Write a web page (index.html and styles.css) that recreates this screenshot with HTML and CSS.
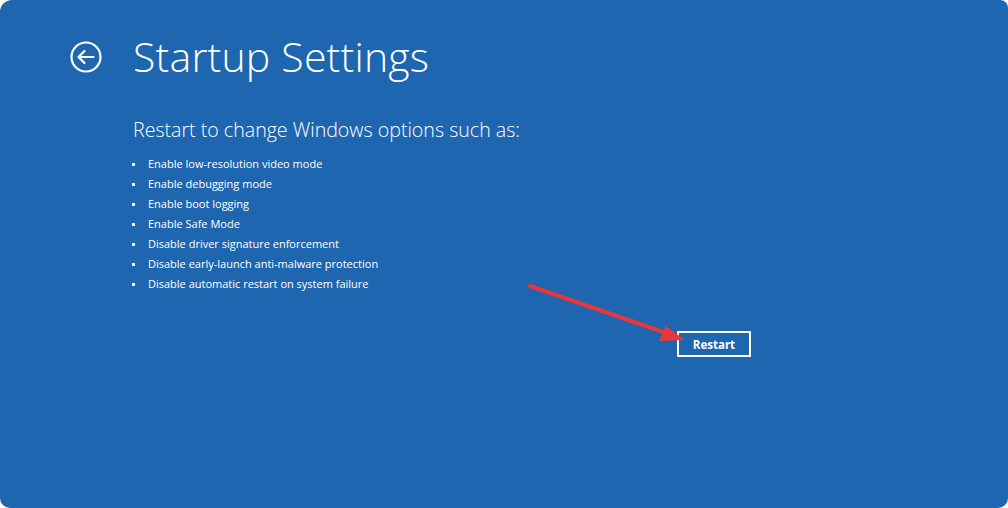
FILE: index.html
```html
<!DOCTYPE html>
<html>
<head>
<meta charset="utf-8">
<link rel="stylesheet" href="styles.css">
</head>
<body>
<div class="screen">
  <header class="head">
    <svg class="back" width="34" height="34" viewBox="0 0 34 34">
      <circle cx="17" cy="17" r="14.5" fill="none" stroke="#fff" stroke-width="2.2"/>
      <path d="M9.5 17 H24.5 M15.5 11 L9.5 17 L15.5 23" fill="none" stroke="#fff" stroke-width="2.2" stroke-linecap="round" stroke-linejoin="round"/>
    </svg>
    <h1 class="title">Startup Settings</h1>
  </header>
  <main class="content">
    <p class="lead">Restart to change Windows options such as:</p>
    <ul class="opts">
      <li>Enable low-resolution video mode</li>
      <li>Enable debugging mode</li>
      <li>Enable boot logging</li>
      <li>Enable Safe Mode</li>
      <li>Disable driver signature enforcement</li>
      <li>Disable early-launch anti-malware protection</li>
      <li>Disable automatic restart on system failure</li>
    </ul>
    <div class="actions">
      <button class="restart">Restart</button>
    </div>
  </main>
  <svg class="arrow" width="170" height="70" viewBox="0 0 170 70">
    <path d="M3 3 L145 52" stroke="#e8373a" stroke-width="4" stroke-linecap="round"/>
    <polygon points="158,57 139,43 132,58" fill="#e8373a"/>
  </svg>
</div>
</body>
</html>
```
FILE: styles.css
```css
html, body {
  margin: 0;
  padding: 0;
  background: #ffffff;
}
.screen {
  position: relative;
  width: 1008px;
  height: 508px;
  background: #1f66b0;
  border-radius: 12px 8px 10px 10px;
  overflow: hidden;
  color: #fff;
  font-family: "Open Sans", "Noto Sans", sans-serif;
}
.head {
  display: flex;
  align-items: center;
  padding: 28px 0 0 69px;
  height: 56px;
}
.back {
  display: block;
  margin-right: 30px;
  margin-top: 1px;
}
.title {
  margin: 0;
  font-weight: 300;
  font-size: 41px;
  letter-spacing: 0.2px;
  line-height: 56px;
}
.content {
  padding: 0 0 0 133px;
}
.lead {
  margin: 33px 0 0 0;
  font-size: 19.6px;
  font-weight: 300;
  line-height: 26px;
}
.opts {
  margin: 11px 0 0 0;
  padding: 0;
  list-style: none;
  font-size: 11px;
  line-height: 20px;
}
.opts li {
  position: relative;
  padding-left: 15px;
}
.opts li::before {
  content: "";
  position: absolute;
  left: -1px;
  top: 9px;
  width: 3px;
  height: 3px;
  background: #fff;
}
.actions {
  display: flex;
  padding: 37px 0 0 544px;
}
.restart {
  width: 74px;
  height: 26px;
  border: 2px solid #fff;
  background: transparent;
  color: #fff;
  font-family: "Open Sans", "Noto Sans", sans-serif;
  font-weight: 700;
  font-size: 11.5px;
  padding: 0;
  cursor: pointer;
}
.arrow {
  position: absolute;
  left: 527px;
  top: 283px;
}
```
